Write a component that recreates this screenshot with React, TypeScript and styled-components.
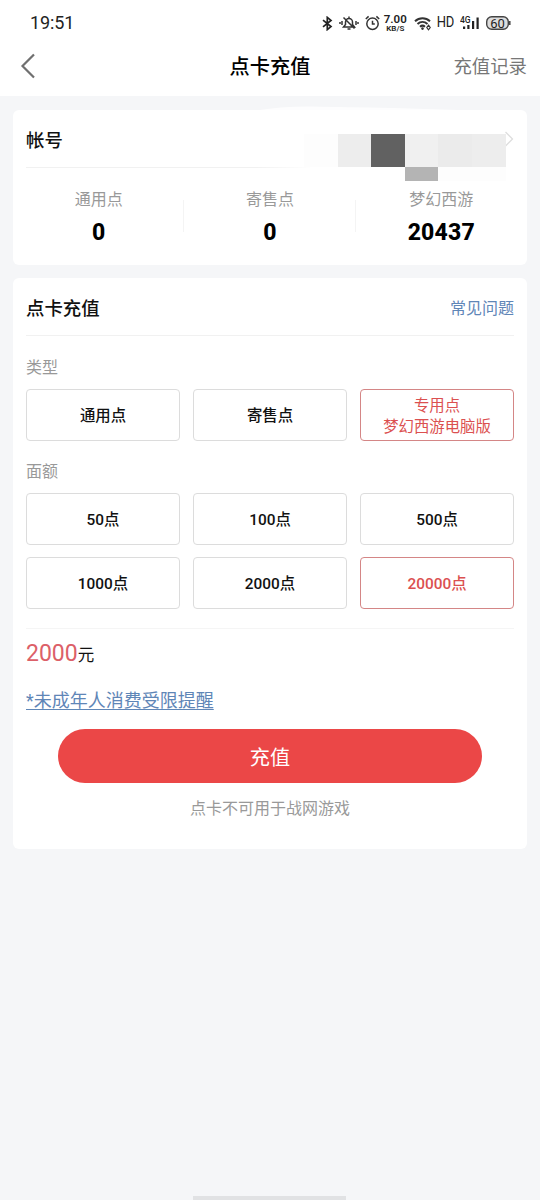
import React from "react";
import styled, { createGlobalStyle } from "styled-components";

const GlobalStyle = createGlobalStyle`
  * { box-sizing: border-box; }
  body {
    margin: 0;
    background: #f5f6f8;
    font-family: Roboto, "Noto Sans CJK SC", sans-serif;
    color: #111;
  }
  button { font: inherit; color: inherit; background: none; border: 0; padding: 0; }
`;

const Screen = styled.div`
  width: 540px;
  height: 1200px;
  display: flex;
  flex-direction: column;
  overflow: hidden;
  background: #f5f6f8;
`;

const StatusBar = styled.div`
  height: 46px;
  flex: none;
  padding: 0 29px 0 30px;
  display: flex;
  align-items: center;
  justify-content: space-between;
  background: #fff;
  color: #222;
`;

const Clock = styled.span`
  font-size: 18px;
  line-height: 20px;
  letter-spacing: -0.1px;
`;

const StatusIcons = styled.div`
  display: flex;
  align-items: center;
  gap: 6px;
  svg { display: block; flex: none; }
`;

const NetSpeed = styled.div`
  width: 23px;
  margin: 0 1px 0 -2px;
  display: flex;
  flex-direction: column;
  align-items: center;
  font-weight: 600;
  font-size: 11.5px;
  line-height: 11px;
  white-space: nowrap;
`;

const SpeedUnit = styled.span`
  font-size: 8px;
  line-height: 8px;
`;

const HdLabel = styled.span`
  margin: 0 0 0 -1px;
  font-size: 13px;
  line-height: 16px;
  transform: scaleY(1.08);
  letter-spacing: -0.3px;
`;

const NavBar = styled.header`
  height: 50px;
  flex: none;
  padding: 0 13px 10px 20px;
  display: grid;
  grid-template-columns: 100px 1fr 107px;
  align-items: center;
  background: #fff;
`;

const BackButton = styled.button`
  display: flex;
  svg { display: block; }
`;

const PageTitle = styled.h1`
  margin: 2px 0 0;
  text-align: center;
  font-size: 20.2px;
  line-height: 28px;
  font-weight: 500;
  color: #000;
`;

const RecordLink = styled.button`
  margin-top: 2px;
  text-align: right;
  font-size: 18.4px;
  line-height: 28px;
  color: #777;
`;

const Card = styled.section<{ $height: number; $top: number }>`
  position: relative;
  flex: none;
  height: ${(p) => p.$height}px;
  margin: ${(p) => p.$top}px 13px 0;
  padding: 0 13px;
  border-radius: 6px;
  background: #fff;
`;

const CardHeader = styled.div<{ $faded?: boolean }>`
  height: 58px;
  padding-top: ${(p) => (p.$faded ? 4 : 3)}px;
  display: flex;
  align-items: center;
  justify-content: space-between;
  background: linear-gradient(90deg, #f1f1f1 ${(p) => (p.$faded ? "230px, transparent 285px" : "100%")})
    left bottom / 100% 1px no-repeat;
  svg { display: block; margin-bottom: 4px; }
`;

const CardTitle = styled.h2`
  margin: 0;
  font-size: 18.4px;
  line-height: 26px;
  font-weight: 500;
`;

const FaqLink = styled.button`
  font-size: 16px;
  line-height: 24px;
  color: #5f86b7;
`;

const Mosaic = styled.div`
  position: absolute;
  left: 291px;
  top: 23.5px;
  display: grid;
  grid-template-columns: repeat(6, 33.6px);
  grid-template-rows: 33.4px 14.5px;
`;

const Tile = styled.span<{ $tone: string }>`
  background: ${(p) => p.$tone};
`;

const Bulge = styled.svg`
  position: absolute;
  left: 240px;
  top: -4px;
`;

const Balances = styled.div`
  display: grid;
  grid-template-columns: 1fr 1fr 1fr;
  margin: 0 -13px;
  padding-top: 19px;
`;

const Balance = styled.div`
  display: flex;
  flex-direction: column;
  align-items: center;
  background: linear-gradient(#f4f4f4, #f4f4f4) right 13px / 1px 32px no-repeat;
  &:last-child { background: none; }
`;

const BalanceName = styled.span`
  font-size: 16px;
  line-height: 26px;
  color: #999;
`;

const BalanceValue = styled.strong`
  margin-top: 6px;
  font-size: 23px;
  line-height: 28px;
  font-weight: 800;
  letter-spacing: 0.2px;
  color: #000;
`;

const GroupLabel = styled.div<{ $top: number }>`
  margin-top: ${(p) => p.$top}px;
  font-size: 16px;
  line-height: 24px;
  color: #999;
`;

const Options = styled.div`
  display: grid;
  grid-template-columns: repeat(3, 154px);
  justify-content: space-between;
  row-gap: 12px;
  margin-top: 9px;
`;

const Option = styled.button<{ $active?: boolean }>`
  height: 52px;
  padding-top: 2px;
  border: 1px solid ${(p) => (p.$active ? "#d48686" : "#dcdcdc")};
  border-radius: 4px;
  font-size: 15.4px;
  line-height: 21px;
  font-weight: 500;
  color: ${(p) => (p.$active ? "#db5050" : "#111")};
`;

const OptionLine = styled.span`
  display: block;
  font-weight: 400;
  &:first-child { margin-top: 1px; }
`;

const Price = styled.div`
  margin-top: 19px;
  padding-top: 9px;
  border-top: 1px solid #f5f5f5;
  font-size: 16.5px;
  line-height: 32px;
`;

const Amount = styled.span`
  font-size: 23px;
  color: #dc6068;
`;

const Notice = styled.a`
  display: block;
  margin-top: 15px;
  font-size: 18px;
  line-height: 28px;
  color: #5f86b7;
  text-decoration: underline;
  text-decoration-thickness: 1px;
  text-underline-offset: 2px;
`;

const PayButton = styled.button`
  display: block;
  width: 424px;
  height: 54px;
  margin: 14px auto 0;
  padding-top: 3px;
  border-radius: 27px;
  background: #eb4747;
  font-size: 20.2px;
  line-height: 30px;
  color: #fff;
`;

const Footnote = styled.p`
  margin: 14px 0 0;
  text-align: center;
  font-size: 16px;
  line-height: 24px;
  color: #999;
`;

const HomeIndicator = styled.div`
  width: 153px;
  height: 4px;
  margin: auto auto 0 193px;
  background: #e1e2e4;
`;

const balances = [
  ["通用点", "0"],
  ["寄售点", "0"],
  ["梦幻西游", "20437"],
];
const amounts = ["50", "100", "500", "1000", "2000", "20000"];
const tones = [
  "#fdfdfd", "#ededed", "#616161", "#f0f0f0", "#ebebeb", "#ededed",
  "transparent", "transparent", "transparent", "#b4b4b4", "#fdfdfd", "#fdfdfd",
];

function StatusGlyphs() {
  return (
    <StatusIcons>
      <svg width="11" height="15" viewBox="0 0 11 15" fill="none" stroke="#222" strokeWidth="1.7">
        <path d="M1 4.2 9 10.6 5.3 13.6V1.4L9 4.4 1 10.8" />
      </svg>
      <svg width="20" height="16" viewBox="0 0 20 16" fill="none" stroke="#333" strokeWidth="1.5">
        <path d="M4.500 12h11l-2-2.500V7a3.500 3.500 0 0 0-7 0v2.500zM10 1.500v2M8.500 14h3M4.500 2.500l11 11M3 6v4M1 7v2M17 6v4M19 7v2" />
      </svg>
      <svg width="15" height="16" viewBox="0 0 15 16" fill="none" stroke="#333" strokeWidth="1.5">
        <circle cx="7.500" cy="8.800" r="5.700" />
        <path d="M7.500 5.700v3.300h2.300M.8 4l2.800-2.600M14.200 4l-2.800-2.600" />
      </svg>
      <NetSpeed>
        <span>7.00</span>
        <SpeedUnit>KB/S</SpeedUnit>
      </NetSpeed>
      <svg width="18" height="15" viewBox="0 0 18 15" fill="none" stroke="#333" strokeWidth="2">
        <path d="M1 5.200c4.400-4 10.600-4 15 0M3.500 8c3-2.700 7-2.700 10 0M6 10.700c1.500-1.300 3.500-1.300 5 0" />
        <circle cx="8.500" cy="12.600" r="1.300" fill="#333" stroke="none" />
        <path d="M14.500 9.200l1.700 2.300-1.700 2.300-1.700-2.300z" strokeWidth="1.200" />
      </svg>
      <HdLabel>HD</HdLabel>
      <svg width="20" height="16" viewBox="0 0 20 16" fill="#222">
        <text x="0" y="8" fontSize="8.500" fontWeight="500" fontFamily="Roboto, sans-serif">4G</text>
        <path d="M3 11.500h2.200V14H3zM7.300 10h2.200v4H7.300zM12 6h2.200v8H12zM16.500 2.500h2.200V14h-2.200z" />
      </svg>
      <svg width="25" height="14" viewBox="0 0 25 14">
        <rect x="0.700" y="0.700" width="21.600" height="12.600" rx="5" fill="#ddd" stroke="#444" strokeWidth="1.400" />
        <path d="M23.800 5v4" stroke="#444" strokeWidth="1.500" />
        <text x="11.500" y="11.500" textAnchor="middle" fontSize="13" fontFamily="Roboto, sans-serif" fill="#222">60</text>
      </svg>
    </StatusIcons>
  );
}

export default function App() {
  return (
    <Screen>
      <GlobalStyle />
      <StatusBar>
        <Clock>19:51</Clock>
        <StatusGlyphs />
      </StatusBar>
      <NavBar>
        <BackButton aria-label="返回">
          <svg width="16" height="26" viewBox="0 0 16 26" fill="none" stroke="#707070" strokeWidth="2.200">
            <path d="M14 1.500 2.500 13 14 24.500" />
          </svg>
        </BackButton>
        <PageTitle>点卡充值</PageTitle>
        <RecordLink>充值记录</RecordLink>
      </NavBar>

      <Card $height={155} $top={14}>
        <Bulge width="260" height="8" viewBox="0 0 260 8">
          <path d="M0 5Q30 0 60 .5T140 2L240 5V8H0Z" fill="#fff" fillOpacity=".8" />
        </Bulge>
        <CardHeader $faded>
          <CardTitle>帐号</CardTitle>
          <svg width="10" height="16" viewBox="0 0 10 16" fill="none" stroke="#dedede" strokeWidth="1.300">
            <path d="M1.500 1 8.500 8l-7 7" />
          </svg>
        </CardHeader>
        <Mosaic>
          {tones.map((tone, i) => (
            <Tile key={i} $tone={tone} />
          ))}
        </Mosaic>
        <Balances>
          {balances.map(([name, value]) => (
            <Balance key={name}>
              <BalanceName>{name}</BalanceName>
              <BalanceValue>{value}</BalanceValue>
            </Balance>
          ))}
        </Balances>
      </Card>

      <Card $height={571} $top={13}>
        <CardHeader>
          <CardTitle>点卡充值</CardTitle>
          <FaqLink>常见问题</FaqLink>
        </CardHeader>
        <GroupLabel $top={20}>类型</GroupLabel>
        <Options>
          <Option>通用点</Option>
          <Option>寄售点</Option>
          <Option $active>
            <OptionLine>专用点</OptionLine>
            <OptionLine>梦幻西游电脑版</OptionLine>
          </Option>
        </Options>
        <GroupLabel $top={19}>面额</GroupLabel>
        <Options>
          {amounts.map((amount) => (
            <Option key={amount} $active={amount === "20000"}>
              {amount}点
            </Option>
          ))}
        </Options>
        <Price>
          <Amount>2000</Amount>元
        </Price>
        <Notice>*未成年人消费受限提醒</Notice>
        <PayButton>充值</PayButton>
        <Footnote>点卡不可用于战网游戏</Footnote>
      </Card>
      <HomeIndicator />
    </Screen>
  );
}
